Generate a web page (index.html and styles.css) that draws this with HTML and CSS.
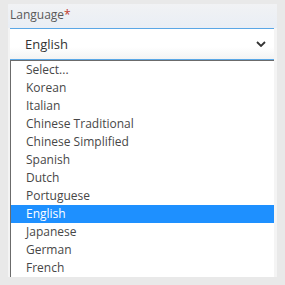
FILE: index.html
```html
<!DOCTYPE html>
<html>
    <head lang="en">
        <meta charset="UTF-8">
        <title>Language</title>
        <link rel="stylesheet" href="styles.css">
    </head>
    <body>
        <div class="field">
            <label class="label">Language<span class="req">*</span></label>
            <div class="select">
                <span class="value">English</span>
                <svg class="chevron" width="10" height="6" viewBox="0 0 10 6">
                    <path d="M1 1 L5 5 L9 1" fill="none" stroke="#333" stroke-width="1.8"/>
                </svg>
            </div>
            <ul class="options">
                <li>Select...</li>
                <li>Korean</li>
                <li>Italian</li>
                <li>Chinese Traditional</li>
                <li>Chinese Simplified</li>
                <li>Spanish</li>
                <li>Dutch</li>
                <li>Portuguese</li>
                <li class="selected">English</li>
                <li>Japanese</li>
                <li>German</li>
                <li>French</li>
            </ul>
        </div>
    </body>
</html>
```

FILE: styles.css
```css
* {
    margin: 0;
    padding: 0;
    box-sizing: border-box;
}
body {
    background: #e9e9e9;
    padding: 4px 0 0 8px;
    font-family: "Open Sans", "Noto Sans", sans-serif;
    color: #444;
}
ul {
    list-style: none;
}
.field {
    width: 269px;
    padding: 0 3px 0 2px;
    background: linear-gradient(#f1f2f4, #e9eef5 24px, #f4f4f4 24px);
}
.label {
    display: block;
    height: 24px;
    line-height: 22px;
    font-size: 12px;
    color: #595959;
}
.req {
    color: #c0392b;
}
.select {
    height: 32px;
    display: flex;
    align-items: center;
    justify-content: space-between;
    padding: 0 8px 0 15px;
    background: linear-gradient(#fff, #fff 60%, #f3f3f3);
    border-top: 1px solid #5aa7e6;
    border-bottom: 1px solid #5aa7e6;
    font-size: 13px;
    color: #333;
}
.options {
    background: #fff;
    border-top: 1px solid #6b6b6b;
    border-left: 1px solid #6b6b6b;
    font-size: 12px;
}
.options li {
    height: 18px;
    line-height: 18px;
    padding-left: 15px;
    color: #474747;
}
.options .selected {
    background: #1e90ff;
    color: #fff;
}
```
